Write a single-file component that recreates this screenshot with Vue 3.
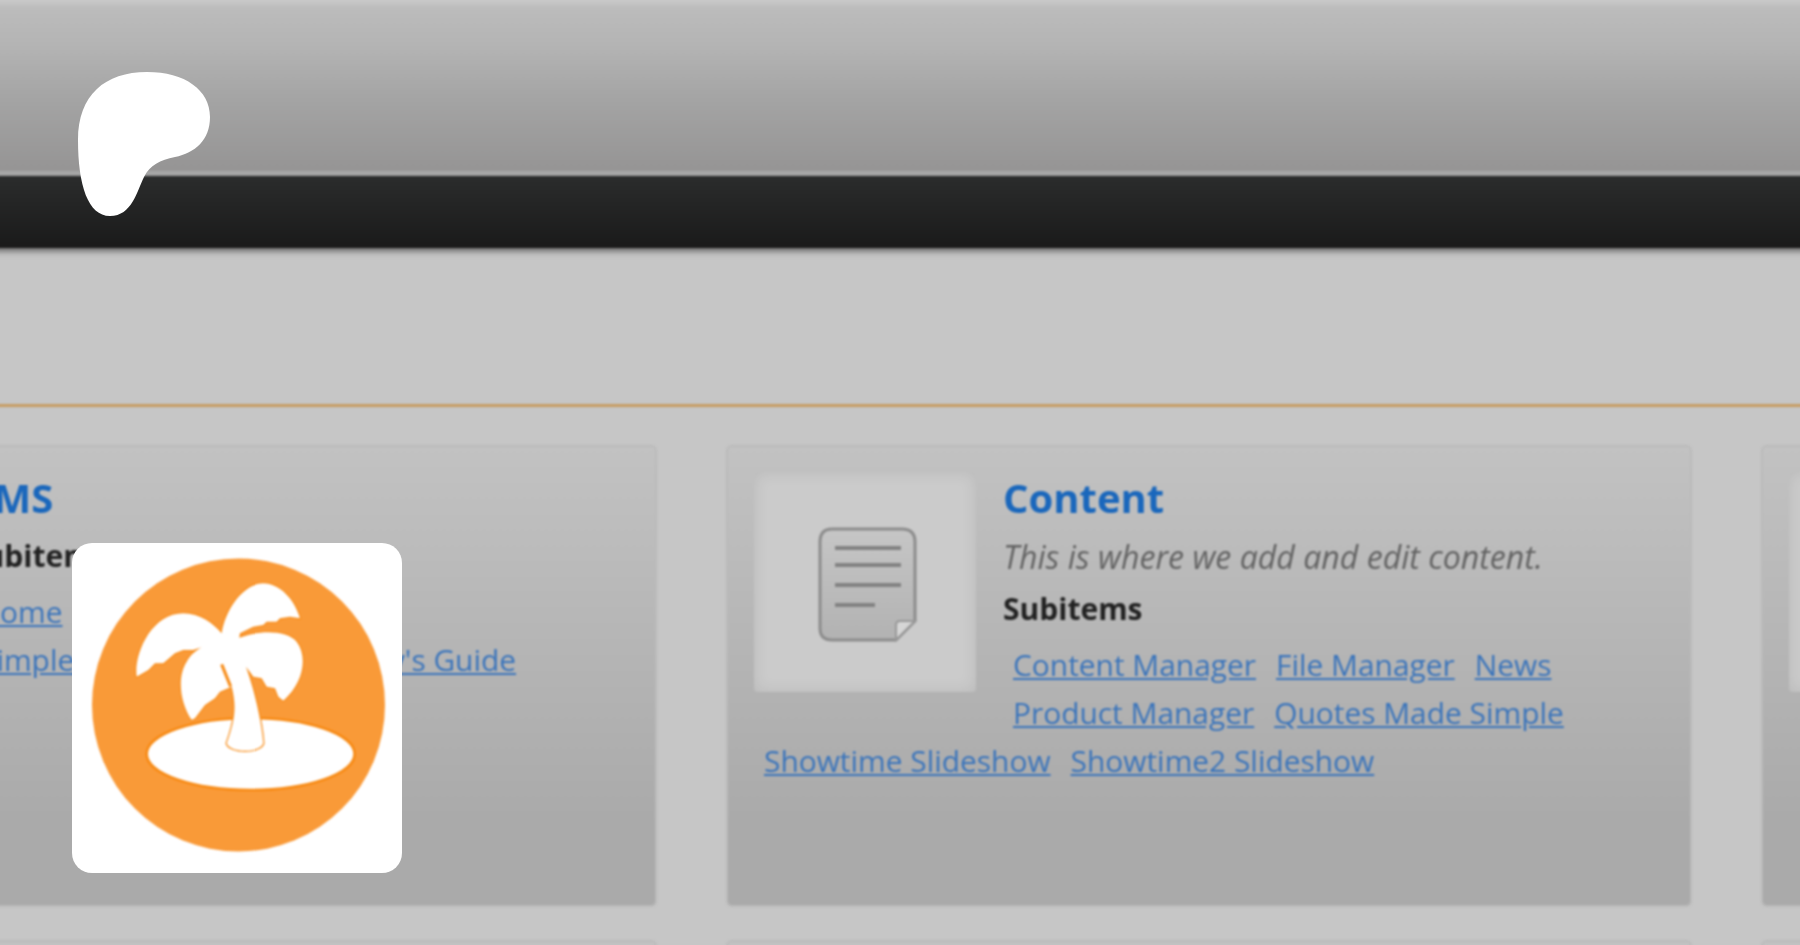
<script setup>
const leftRows = [['Home', 'Extensions'], ['Simple', 'CMS Made Simple Dev\'s Guide']]
const midLinks = ['Content Manager', 'File Manager', 'News', 'Product Manager', 'Quotes Made Simple', 'Showtime Slideshow', 'Showtime2 Slideshow']
</script>

<template>
  <div class="viewport">
    <div class="page">
      <header class="top"></header>
      <nav class="bar"></nav>
      <div class="crumbs"></div>
      <main class="grid">
        <section class="card">
          <div class="thumb"></div>
          <h2>CMS</h2>
          <h3>Subitems</h3>
          <div class="links">
            <div v-for="(row, i) in leftRows" :key="i" class="row">
              <a v-for="l in row" :key="l" class="link">{{ l }}</a>
            </div>
          </div>
        </section>
        <section class="card">
          <div class="thumb center">
            <svg class="doc" width="99" height="115" viewBox="0 0 99 115">
              <defs>
                <linearGradient id="paper" x1="0" y1="0" x2="0" y2="1">
                  <stop offset="0" stop-color="#c6c6c6"/>
                  <stop offset="1" stop-color="#b2b2b2"/>
                </linearGradient>
              </defs>
              <path d="M14 2H84Q97 2 97 15V94L78 113H14Q2 113 2 101V15Q2 2 14 2Z" fill="url(#paper)" stroke="#8c8c8c" stroke-width="3"/>
              <path d="M17 21H83M17 38H83M17 58H83M17 78H57" stroke="#828282" stroke-width="4" fill="none"/>
              <path d="M78 113V98Q78 94 82 94H97Z" fill="#d6d6d6" stroke="#989898" stroke-width="2"/>
            </svg>
          </div>
          <h2>Content</h2>
          <p class="desc">This is where we add and edit content.</p>
          <h3>Subitems</h3>
          <div class="links">
            <a v-for="l in midLinks" :key="l" class="link">{{ l }}</a>
          </div>
        </section>
        <section class="card">
          <div class="thumb"></div>
        </section>
        <section class="card"></section>
        <section class="card"></section>
        <section class="card"></section>
      </main>
    </div>

    <svg class="blob" width="134" height="146" viewBox="77 71 134 146">
      <path d="M147 72C185 72 210 90 210 117C210 140 195 153 175 157C160 160 150 165 144 177C137 191 132 216 110 216C88 216 78 185 78 140C78 95 105 72 147 72Z" fill="#fff"/>
    </svg>

    <div class="badge">
      <svg class="palm" width="330" height="330" viewBox="0 0 330 330">
        <circle cx="166.5" cy="162" r="146.5" fill="#f99a38"/>
        <g transform="translate(48 27) scale(0.3333)">
          <ellipse cx="392" cy="552" rx="312" ry="108" fill="#fff" stroke="#f78a14" stroke-width="8"/>
          <path d="M305 190C315 120 370 40 430 40C480 40 525 90 540 145L510 140L480 145L470 155L440 155L430 165L400 170L360 190L358 203C420 180 500 180 530 215C565 260 550 340 490 392L475 380L465 355L440 350L425 325L400 320L378 290C400 350 425 450 430 520C420 550 330 550 320 520C345 450 350 410 335 350L300 365L285 385L255 405L225 445L215 450C180 400 170 320 200 275C210 255 230 240 245 232L220 240L190 240L165 250L130 280L105 280L85 300L50 320C40 260 90 130 190 130C240 130 280 160 305 190Z" fill="#fff" stroke="#f78a14" stroke-width="7" stroke-linejoin="round" paint-order="stroke"/>
          <path d="M305 283L332 350" stroke="#f78a14" stroke-width="9" fill="none"/>
        </g>
      </svg>
    </div>
  </div>
</template>

<style scoped>
.viewport {
  position: relative;
  width: 1800px;
  height: 945px;
  overflow: hidden;
  background: #c6c6c6;
  font-family: "Open Sans", "Noto Sans", sans-serif;
}
.page {
  filter: blur(0.85px);
}
.top {
  height: 171px;
  margin: 0 -10px;
  background: linear-gradient(#cacaca 0, #bcbcbc 8px, #b4b4b4 45px, #a4a4a4 100px, #969595 168px);
  border-bottom: 5px solid #a9a9a9;
  box-shadow: 0 -10px 0 #cacaca;
}
.bar {
  height: 72px;
  margin: 0 -10px;
  background: linear-gradient(#2b2c2c, #1a1a1a);
  box-shadow: 0 3px 6px rgba(0, 0, 0, 0.5);
}
.crumbs {
  height: 156px;
  margin: 0 -10px;
  border-bottom: 3px solid #c69c63;
}
.grid {
  display: grid;
  grid-template-columns: repeat(3, 966px);
  grid-auto-rows: 462px;
  gap: 33px 69px;
  margin: 38px 0 0 -309px;
}
.card {
  box-sizing: border-box;
  padding: 25px 26px;
  border: 2px solid #bababa;
  border-radius: 6px;
  background: linear-gradient(#c2c2c2, #aaaaaa 82%);
}
.thumb {
  float: left;
  width: 222px;
  height: 220px;
  margin-right: 27px;
  border-radius: 4px;
  background: #cbcbcb;
  box-shadow: inset 0 0 16px rgba(0, 0, 0, 0.09);
}
.center {
  display: flex;
  align-items: center;
  justify-content: center;
}
.doc {
  margin: 5px 0 0 4px;
}
h2 {
  margin: 1px 0 7px;
  height: 50px;
  font-size: 40px;
  line-height: 50px;
  font-weight: 700;
  color: #1a67bc;
}
.desc {
  margin: 0;
  height: 53px;
  font-size: 32.1px;
  line-height: 53px;
  font-style: italic;
  color: #636363;
}
h3 {
  margin: 0;
  height: 58px;
  font-size: 30px;
  line-height: 52px;
  font-weight: 700;
  color: #222;
}
.links {
  line-height: 48px;
  font-size: 29.9px;
  color: #3a74bb;
}
.link {
  display: inline-block;
  margin: 0 10px;
  text-decoration: underline;
}
.row:last-child .link:first-child {
  margin-left: 12px;
}
.row .link:last-child {
  margin-left: 9px;
}
.blob {
  position: absolute;
  left: 77px;
  top: 71px;
}
.badge {
  position: absolute;
  left: 72px;
  top: 543px;
  width: 330px;
  height: 330px;
  border-radius: 20px;
  background: #fff;
}
.palm {
  display: block;
  filter: blur(0.8px);
}
</style>

<style>
html, body { margin: 0; overflow: hidden; background: #c6c6c6; }
</style>
